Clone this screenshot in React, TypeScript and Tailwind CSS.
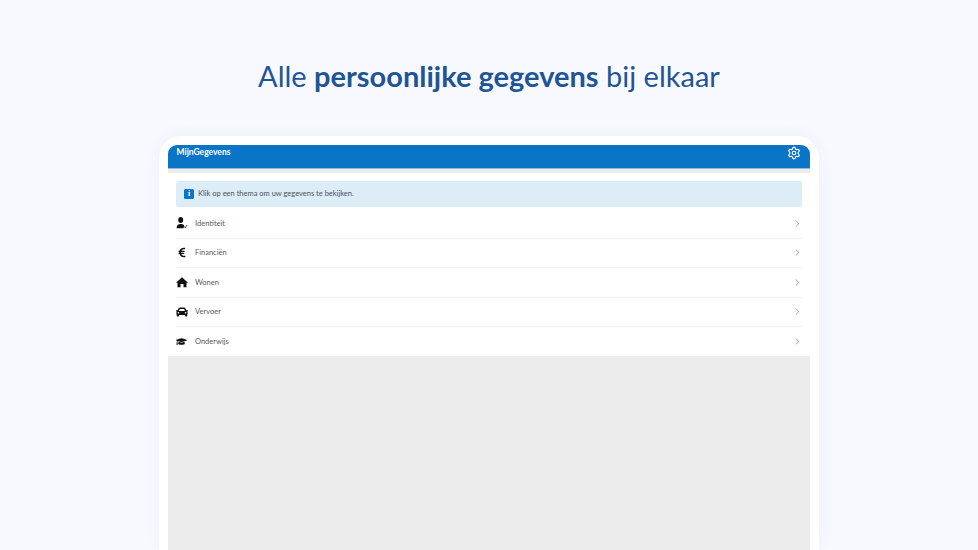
import { ChevronRight, Settings } from "lucide-react";
import { FaCar, FaEuroSign, FaGraduationCap } from "react-icons/fa";

const UserCheckIcon = () => (
  <svg viewBox="0 0 12 12" className="w-[12px] h-[12px]" fill="#111">
    <ellipse cx="4.7" cy="3" rx="2.5" ry="2.9" />
    <path d="M0.6 11.200c0-2.800 1.400-4.300 4.100-4.300 1.600 0 2.800.5 3.500 1.500l-.7 2.800z" />
    <path d="M8.200 9.400l1 1.400 1.800-2.800" fill="none" stroke="#111" strokeWidth="0.8" />
  </svg>
);

const HouseIcon = () => (
  <svg viewBox="0 0 12 12" className="w-[12px] h-[12px]" fill="#111">
    <path d="M6 1.200 12 6.800h-1.500v4.400H7.500V8h-3v3.200h-3V6.800H0z" />
  </svg>
);

const THEMES = [
  { id: 1, label: "Identiteit", icon: <UserCheckIcon /> },
  { id: 2, label: "Financiën", icon: <FaEuroSign className="w-[10px] h-[11px] text-[#111] ml-[1px]" /> },
  { id: 3, label: "Wonen", icon: <HouseIcon /> },
  { id: 4, label: "Vervoer", icon: <FaCar className="w-[12px] h-[12px] text-[#111]" /> },
  { id: 5, label: "Onderwijs", icon: <FaGraduationCap className="w-[11px] h-[11px] text-[#111]" /> },
];

export default function App() {
  return (
    <div className="h-[550px] overflow-hidden bg-[#f7f9ff] flex flex-col items-center font-['Lato',sans-serif]">
      <h1 className="mt-[56px] h-[40px] leading-[40px] text-[29px] text-[#1f5594] whitespace-nowrap">
        Alle <span className="font-bold">persoonlijke gegevens</span> bij elkaar
      </h1>

      <div className="mt-[40px] w-[660px] flex-1 bg-white rounded-t-[22px] pt-[9px] px-[9px] shadow-[0_0_16px_rgba(60,90,160,0.06)]">
        <div className="h-full flex flex-col bg-[#ececec] rounded-t-[9px] overflow-hidden">
          <header className="h-[24px] shrink-0 bg-[#0a74c7] border-b border-[#8db9de] flex items-start justify-between pl-[8.5px] pr-[9px]">
            <span className="text-[8.5px] leading-[15px] font-bold text-white">MijnGegevens</span>
            <Settings className="w-[14px] h-[14px] text-white mt-[1px]" strokeWidth={2} />
          </header>

          <div className="mt-[4px] bg-white px-[8px] pt-[8px]">
            <div className="h-[26px] bg-[#dcedf8] rounded-[2px] flex items-center gap-[4px] pl-[8px]">
              <span className="w-[10px] h-[10px] rounded-[1.5px] bg-[#0a74c7] text-white text-[8px] leading-[10px] font-bold text-center font-['Liberation_Serif',serif]">i</span>
              <span className="text-[7.5px] text-[#4c5258]">Klik op een thema om uw gegevens te bekijken.</span>
            </div>

            <ul className="pt-[2px]">
              {THEMES.map((theme, i) => (
                <li
                  key={theme.id}
                  className={`flex items-center ${i < THEMES.length - 1 ? "h-[29.5px] border-b border-[#f0f0f0]" : "h-[29px]"}`}
                >
                  <span className="w-[19px] flex items-center justify-start">{theme.icon}</span>
                  <span className="flex-1 text-[7.5px] text-[#5a5a5a]">{theme.label}</span>
                  <ChevronRight className="w-[11px] h-[11px] text-[#777] mr-[-1px]" strokeWidth={1.5} />
                </li>
              ))}
            </ul>
          </div>
        </div>
      </div>
    </div>
  );
}
